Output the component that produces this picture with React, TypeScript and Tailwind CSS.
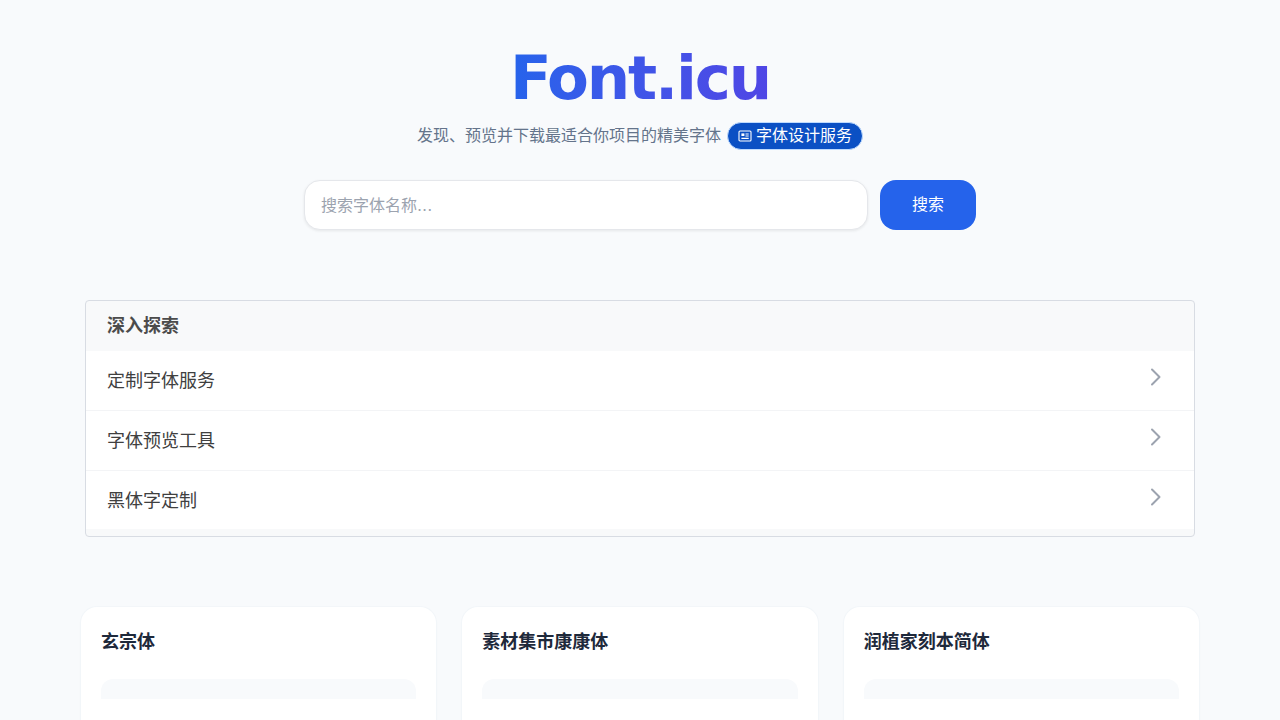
import React from "react";

const font = "font-['DejaVu_Sans','Noto_Sans_CJK_SC',sans-serif]";

function Chevron({ last }: { last?: boolean }) {
  return (
    <svg width="24" height="24" viewBox="0 0 24 24" fill="none" stroke="#9ca3af" strokeWidth="2" strokeLinecap="round" strokeLinejoin="round" className={`mr-[26px] ${last ? "mt-[-6px]" : "mt-[-8px]"}`}>
      <path d="M8 4.5l7.5 7.5-7.5 7.5" />
    </svg>
  );
}

function Row({ label, last }: { label: string; last?: boolean }) {
  return (
    <div className={`flex items-center justify-between pl-[21px] ${last ? "h-[58px]" : "h-[60px] border-b border-[#f3f4f6]"}`}>
      <span className="text-[18px] text-[#404040]">{label}</span>
      <Chevron last={last} />
    </div>
  );
}

function Card({ title }: { title: string }) {
  return (
    <div className="h-[140px] rounded-2xl bg-white px-5 pt-[21px] shadow-[0_0_0_1px_rgba(241,245,249,0.8),0_1px_3px_rgba(0,0,0,0.03)]">
      <h3 className="text-[18px] font-semibold leading-[27px] text-[#1e293b]">{title}</h3>
      <div className="mt-[24px] h-5 rounded-t-xl bg-[#f8fafc]" />
    </div>
  );
}

export default function App() {
  return (
    <div className={`h-[720px] overflow-hidden bg-[#f8fafc] ${font}`}>
      <header className="flex flex-col items-center pt-[40px]">
        <h1 className="bg-gradient-to-r from-[#2563eb] to-[#4f46e5] bg-clip-text text-[61px] font-bold leading-[76px] tracking-[-2.15px] text-transparent">
          Font.icu
        </h1>
        <div className="mt-[4px] flex h-[32px] items-center gap-[6px] text-[16px] text-[#64748b]">
          <span>发现、预览并下载最适合你项目的精美字体</span>
          <span className="flex h-[28px] items-center gap-[4px] rounded-full border border-[#bfdbfe] bg-[#0b50c4] px-[10px] text-white">
            <svg width="14" height="14" viewBox="0 0 14 14" fill="none" stroke="white" strokeWidth="1.1">
              <rect x="1" y="2" width="12" height="10" rx="1" />
              <rect x="3.4" y="4.4" width="3" height="2.6" fill="white" stroke="none" />
              <path d="M7.5 5h3.2M7.5 7h3.2M3.4 9.4h7.3" />
            </svg>
            字体设计服务
          </span>
        </div>
      </header>

      <div className="mt-[28px] flex justify-center gap-3">
        <input
          placeholder="搜索字体名称..."
          className="h-[50px] w-[564px] rounded-2xl border border-[#e5e7eb] bg-white px-4 text-[16px] shadow-[0_1px_3px_rgba(0,0,0,0.08)] outline-none placeholder:text-[#9ca3af]"
        />
        <button className="h-[50px] w-[96px] rounded-2xl bg-[#2563eb] text-[16px] text-white">搜索</button>
      </div>

      <section className="mx-auto mt-[70px] h-[237px] w-[1110px] overflow-hidden rounded-[4px] border border-[#d8dce3] bg-[#f8f9fa]">
        <div className="flex h-[50px] items-center px-[21px] pb-[2px] text-[18px] font-semibold text-[#4b4b4b]">深入探索</div>
        <div className="h-[178px] bg-white">
          <Row label="定制字体服务" />
          <Row label="字体预览工具" />
          <Row label="黑体字定制" last />
        </div>
      </section>

      <div className="mx-auto mt-[70px] grid w-[1118px] grid-cols-3 gap-[26px]">
        <Card title="玄宗体" />
        <Card title="素材集市康康体" />
        <Card title="润植家刻本简体" />
      </div>
    </div>
  );
}
